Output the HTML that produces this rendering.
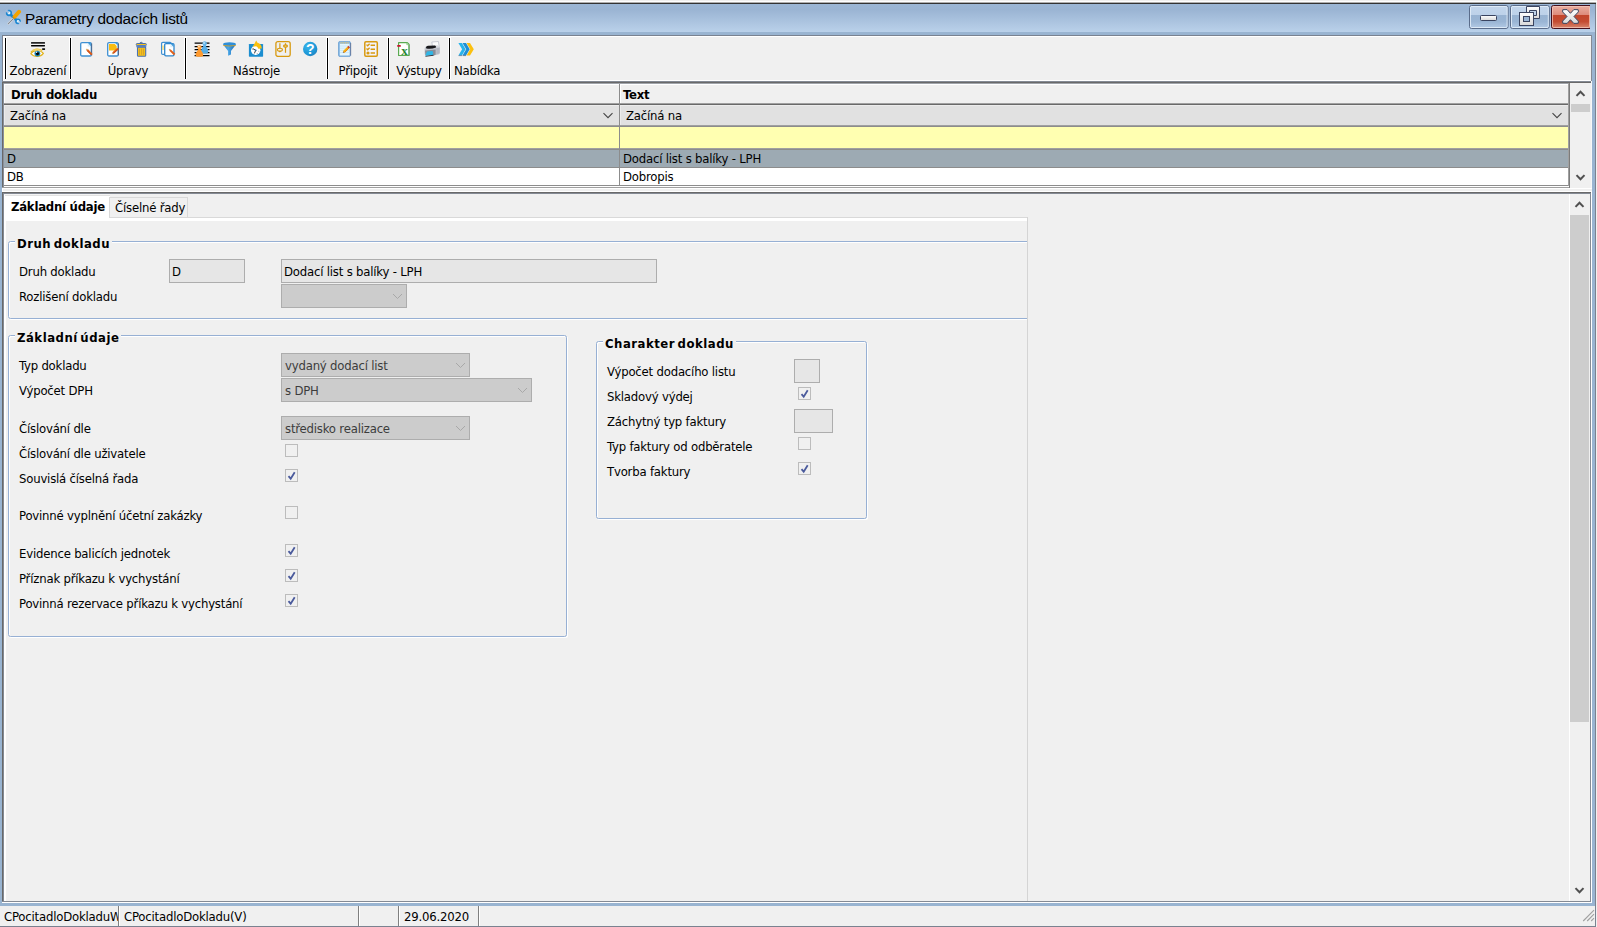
<!DOCTYPE html>
<html lang="cs">
<head>
<meta charset="utf-8">
<title>Parametry dodacích listů</title>
<style>
html,body{margin:0;padding:0;}
body{width:1597px;height:927px;overflow:hidden;position:relative;background:#f0f0f0;
 font-family:"DejaVu Sans Condensed","Liberation Sans","DejaVu Sans",sans-serif;font-size:13px;color:#000;letter-spacing:-0.2px;}
div,span,svg{position:absolute;box-sizing:border-box;}
.t{white-space:nowrap;line-height:16px;height:16px;margin-top:1px;}
.b{font-weight:bold;letter-spacing:-0.25px;}
.gt{font-weight:bold;letter-spacing:0.5px;word-spacing:-2px;background:#f0f0f0;padding:0 2px 0 2px;margin-left:-1px;}
.sep{width:1px;background:#000;top:38px;height:41px;}
.sepw{width:3px;background:#fff;top:37px;height:42px;}
.lab{top:62px;text-align:center;}
.inp{background:#e6e6e6;border:1px solid #adadad;height:24px;}
.cmb{background:#cccccc;border:1px solid #adadad;height:24px;color:#3c3c3c;}
.cb{width:13px;height:13px;border:1px solid #bcbcbc;background:#f0f0f0;}
.grp{border:1px solid #97b0d4;border-radius:2.5px;box-shadow:inset 1px 1px 0 #fff, 1px 1px 0 #fff;}
</style>
</head>
<body>
<!-- window frame -->
<div style="left:0;top:0;width:1597px;height:1px;background:#f0f0f0"></div>
<div style="left:0;top:1px;width:1597px;height:1px;background:#fff"></div>
<div style="left:0;top:2px;width:1596px;height:1px;background:#aeaeae"></div>
<div style="left:0;top:3px;width:1596px;height:1px;background:#333"></div>
<div id="frame" style="left:0;top:4px;width:1595px;height:902px;background:#99b4d1"></div>
<div style="left:1595px;top:4px;width:1px;height:923px;background:#7a8290"></div>
<div id="titlebar" style="left:0;top:4px;width:1595px;height:28px;background:linear-gradient(#9bb6d5,#9ab4d3 20%,#bad1ea)"></div>
<div class="t" id="title" style="left:25px;top:8px;font-family:'Liberation Sans',sans-serif;font-size:15.4px;line-height:20px;height:20px;letter-spacing:-0.27px">Parametry dodacích listů</div>

<!-- caption buttons -->
<svg style="left:1465px;top:4px" width="130" height="28" viewBox="1465 4 130 28">
<defs>
<linearGradient id="bg1" x1="0" y1="0" x2="0" y2="1"><stop offset="0" stop-color="#c3d6ec"/><stop offset="0.42" stop-color="#bdd1e9"/><stop offset="0.43" stop-color="#98b3d2"/><stop offset="0.7" stop-color="#9ab5d4"/><stop offset="1" stop-color="#b4cbe6"/></linearGradient>
<linearGradient id="bg2" x1="0" y1="0" x2="0" y2="1"><stop offset="0" stop-color="#eab0a2"/><stop offset="0.42" stop-color="#dd8a7a"/><stop offset="0.43" stop-color="#c2462c"/><stop offset="0.7" stop-color="#c44c32"/><stop offset="1" stop-color="#d98a72"/></linearGradient>
<linearGradient id="gw" x1="0" y1="0" x2="0" y2="1"><stop offset="0" stop-color="#ffffff"/><stop offset="1" stop-color="#d8d8d8"/></linearGradient>
</defs>
<rect x="1469.5" y="5.5" width="38.6" height="23" rx="2" fill="url(#bg1)" stroke="#5a6c8a"/>
<rect x="1470.5" y="6.5" width="36.6" height="21" rx="1.2" fill="none" stroke="#e4eef9" stroke-opacity="0.85"/>
<rect x="1510.5" y="5.5" width="38.8" height="23" rx="2" fill="url(#bg1)" stroke="#5a6c8a"/>
<rect x="1511.5" y="6.5" width="36.8" height="21" rx="1.2" fill="none" stroke="#e4eef9" stroke-opacity="0.85"/>
<path d="M1590 5.5 H1553.5 Q1551.5 5.5 1551.5 7.5 V26.5 Q1551.5 28.5 1553.5 28.5 H1590 Z" fill="url(#bg2)"/>
<path d="M1590 5.5 H1553.5 Q1551.5 5.5 1551.5 7.5 V26.5 Q1551.5 28.5 1553.5 28.5 H1590" fill="none" stroke="#45101c"/>
<rect x="1552.5" y="6.5" width="37" height="21" rx="1.2" fill="none" stroke="#f4c8bc" stroke-opacity="0.75"/>
<!-- minimize glyph -->
<rect x="1480.5" y="15.5" width="16" height="5" rx="1" fill="url(#gw)" stroke="#3a4460"/>
<!-- restore glyph -->
<path d="M1526.5 6.5 h13 v12 h-13 z M1529.5 10.5 v5 h7 v-5 z" fill="url(#gw)" fill-rule="evenodd" stroke="#3a4460"/>
<rect x="1519.5" y="12.5" width="14" height="13" fill="url(#gw)" stroke="#3a4460"/>
<rect x="1523.5" y="16.5" width="6" height="5" fill="#9ab5d4" stroke="#3a4460"/>
<!-- close glyph -->
<path d="M1562.8 9.7 L1567.1 9.6 L1570.45 13.3 L1573.8 9.6 L1578.2 9.7 L1578.4 11.9 L1574.0 16.5 L1578.4 21.1 L1578.2 23.3 L1573.8 23.4 L1570.45 19.7 L1567.1 23.4 L1562.8 23.3 L1562.6 21.1 L1567.0 16.5 L1562.6 11.9 Z" fill="url(#gw)" stroke="#3a4460" stroke-width="1" stroke-linejoin="round"/>
</svg>

<!-- toolbar -->
<div id="toolbar" style="left:2px;top:35px;width:1590px;height:46px;background:#f0f0f0;border:1px solid #7a8290;border-bottom:none;box-shadow:inset 1px 1px 0 #fff"></div>
<div style="left:3px;top:80px;width:1588px;height:1px;background:#fff"></div>


<!-- toolbar separators -->
<div class="sepw" style="left:4px"></div><div class="sep" style="left:5px"></div>
<div class="sepw" style="left:69px"></div><div class="sep" style="left:70px"></div>
<div class="sepw" style="left:184px"></div><div class="sep" style="left:185px"></div>
<div class="sepw" style="left:326px"></div><div class="sep" style="left:327px"></div>
<div class="sepw" style="left:387px"></div><div class="sep" style="left:388px"></div>
<div class="sepw" style="left:448px"></div><div class="sep" style="left:449px"></div>
<!-- toolbar labels -->
<div class="t lab" style="left:6px;width:64px">Zobrazení</div>
<div class="t lab" style="left:71px;width:114px">Úpravy</div>
<div class="t lab" style="left:186px;width:141px">Nástroje</div>
<div class="t lab" style="left:328px;width:60px">Připojit</div>
<div class="t lab" style="left:389px;width:60px">Výstupy</div>
<div class="t" style="left:454px;top:62px">Nabídka</div>
<!-- ICONS-BEGIN -->
<!-- title icon -->
<svg style="left:5px;top:9px" width="17" height="17" viewBox="0 0 17 17">
<path d="M4.6 4.8 L12.6 12.2" stroke="#1b86d2" stroke-width="2.6" fill="none"/>
<circle cx="4" cy="4" r="2.3" fill="#e4f4fb" stroke="#1b86d2" stroke-width="1.7"/>
<path d="M3.6 3.6 L0.8 1.2" stroke="#a2bcda" stroke-width="2.2" fill="none"/>
<circle cx="13" cy="12.3" r="2.1" fill="#e4f4fb" stroke="#1b86d2" stroke-width="1.6"/>
<path d="M13.4 12.6 L16 14.6" stroke="#b0c9e5" stroke-width="2.1" fill="none"/>
<path d="M8.4 9.6 L2.9 15.2" stroke="#e8eef4" stroke-width="2.2" fill="none"/>
<path d="M8.6 9.4 L2.9 15.2" stroke="#7c838c" stroke-width="1.1" fill="none"/>
<path d="M9.6 7.8 L14 2.8" stroke="#f4a300" stroke-width="4" stroke-linecap="round" fill="none"/>
<path d="M8 7.6 L9.8 9.6" stroke="#d88600" stroke-width="1" fill="none"/>
</svg>
<!-- eye / Zobrazeni -->
<svg style="left:30px;top:41px" width="16" height="17" viewBox="0 0 16 17">
<rect x="1" y="1" width="14" height="1.7" rx="0.5" fill="#262626"/>
<rect x="1" y="4" width="14" height="1.4" rx="0.4" fill="#000"/>
<rect x="12.1" y="7.2" width="3" height="1.8" rx="0.4" fill="#111"/>
<path d="M0.9 11.4 C3 7.6 9 7.2 12.2 9.6" fill="none" stroke="#e9bb22" stroke-width="1.3"/>
<path d="M2.2 9.6 C4.4 8.2 8 8 10.4 9" fill="none" stroke="#f2d878" stroke-width="0.8"/>
<path d="M0.8 12.7 C3.4 8.9 10.6 8.9 13.4 12.4 C10.6 16.5 3.8 16.3 0.8 12.7 Z" fill="#fff" stroke="#e2b41e" stroke-width="1.1"/>
<circle cx="7.4" cy="12.6" r="2.9" fill="#1f86b6"/>
<circle cx="7.5" cy="12.6" r="1.6" fill="#050505"/>
<circle cx="6.6" cy="11.3" r="0.7" fill="#fff"/>
</svg>
<!-- new doc -->
<svg style="left:79px;top:41px" width="16" height="16" viewBox="0 0 16 16">
<rect x="1.7" y="1.6" width="10.6" height="13.4" rx="1.3" fill="#fff" stroke="#3f90d2" stroke-width="1.3"/>
<path d="M12.7 2.4 V14.4" stroke="#4a506a" stroke-width="0.7"/>
<path d="M8.6 1.8 H11.9 V5.4 Z" fill="#3f9ada"/>
<path d="M8.6 1.8 L11.9 5.4 H8.6 Z" fill="#d6ecfa"/>
<path d="M7.3 8.1 L8.6 9.2" stroke="#d4b070" stroke-width="1.6" fill="none"/>
<path d="M8.4 9 L12.9 13.6" stroke="#e0601a" stroke-width="2" fill="none"/>
<path d="M8 9.6 L12.4 14" stroke="#b8401a" stroke-width="0.7" fill="none"/>
</svg>
<!-- edit doc -->
<svg style="left:106px;top:41px" width="16" height="16" viewBox="0 0 16 16">
<rect x="1.7" y="1.6" width="10.4" height="13.4" rx="1.3" fill="#fff" stroke="#3f90d2" stroke-width="1.3"/>
<path d="M12.5 2.4 V14.4" stroke="#4a506a" stroke-width="0.7"/>
<path d="M9 1.8 H11.6 V4.6 Z" fill="#3f9ada"/>
<path d="M3 3 H8.8 L10.7 5 V9.4 H3 Z" fill="#f9bc12"/>
<path d="M6.2 12.7 L7.4 11.6" stroke="#d4b070" stroke-width="1.5" fill="none"/>
<path d="M7.1 11.9 L12 7.4" stroke="#e0601a" stroke-width="2" fill="none"/>
<path d="M7.6 12.4 L12.4 8" stroke="#b8401a" stroke-width="0.7" fill="none"/>
</svg>
<!-- trash -->
<svg style="left:133px;top:41px" width="16" height="16" viewBox="0 0 16 16">
<path d="M6.6 2.2 Q8.2 0.2 9.8 2.2" fill="#f9c21a" stroke="#4a72b0" stroke-width="1"/>
<rect x="3.3" y="2.5" width="10" height="2" rx="0.8" fill="#f9c21a" stroke="#4a72b0" stroke-width="1"/>
<rect x="3.3" y="4.4" width="10" height="1.9" fill="#5f86c6"/>
<rect x="4.5" y="6.2" width="8.2" height="9" rx="0.8" fill="#f9c21a" stroke="#4a72b0" stroke-width="1.1"/>
<path d="M6.4 7.6 V13.8 M8.6 7.6 V13.8 M10.6 7.6 V13.8" stroke="#d2a22a" stroke-width="1"/>
</svg>
<!-- copy doc -->
<svg style="left:160px;top:41px" width="16" height="16" viewBox="0 0 16 16">
<rect x="1.6" y="1.4" width="9.6" height="12" rx="1.2" fill="#fff" stroke="#3f90d2" stroke-width="1.2"/>
<path d="M3 4.6 V9" stroke="#f5cf52" stroke-width="1.2"/>
<rect x="4.7" y="2.6" width="9.3" height="12.2" rx="1.2" fill="#fff" stroke="#2f86cc" stroke-width="1.3"/>
<path d="M10.4 2.8 H13.6 V6.2 Z" fill="#3f9ada"/>
<path d="M10.4 2.8 L13.6 6.2 H10.4 Z" fill="#d6ecfa"/>
<path d="M9.2 8.3 L10.3 9.3" stroke="#b8a078" stroke-width="1.5" fill="none"/>
<path d="M10.1 9.1 L14.6 13.5" stroke="#e0601a" stroke-width="2" fill="none"/>
</svg>
<!-- users list -->
<svg style="left:194px;top:41px" width="16" height="16" viewBox="0 0 16 16">
<path d="M0.6 2.1 H15.5 M0.6 5.6 H15.5 M0.6 8.6 H15.5 M0.6 11.7 H15.5 M0.6 14.7 H15.5" stroke="#000" stroke-width="1.3"/>
<path d="M9.6 3.6 H11.7 C11.7 6 14.3 7.4 14.3 10.6 Q14.3 12.4 12.6 12.4 H8.7 Q7 12.4 7 10.6 C7 7.4 9.6 6 9.6 3.6 Z" fill="#57aee6"/>
<circle cx="10.65" cy="2.5" r="2.2" fill="#64b6ea"/>
<circle cx="10.1" cy="1.9" r="0.9" fill="#c4e4f8"/>
<path d="M4.4 7.2 H6.5 C6.5 9.6 9.2 11 9.2 14 Q9.2 15.7 7.5 15.7 H3.3 Q1.6 15.7 1.6 14 C1.6 11 4.4 9.6 4.4 7.2 Z" fill="#ff9a2e"/>
<circle cx="5.4" cy="6.1" r="2.2" fill="#ffa03a"/>
<circle cx="4.9" cy="5.5" r="0.9" fill="#ffe2c0"/>
</svg>
<!-- funnel -->
<svg style="left:221px;top:41px" width="16" height="16" viewBox="0 0 16 16">
<defs><linearGradient id="fg" x1="0" y1="0" x2="1" y2="0"><stop offset="0" stop-color="#2a86d0"/><stop offset="0.4" stop-color="#4aa6e6"/><stop offset="1" stop-color="#1668b8"/></linearGradient></defs>
<path d="M2.1 3.4 L7.1 10 V14.8 L10 13.6 V10 L14.9 3.4 Z" fill="url(#fg)"/>
<ellipse cx="8.5" cy="3.2" rx="6.4" ry="1.9" fill="#2e8ed8"/>
<path d="M2.3 4.5 Q8.5 5.5 14.7 4.5" stroke="#d8a020" stroke-width="0.9" fill="none"/>
</svg>
<!-- clock arrow -->
<svg style="left:248px;top:40px" width="16" height="17" viewBox="0 -1 16 17">
<rect x="0.9" y="2.9" width="14.2" height="12.8" rx="0.6" fill="#1c8ed0"/>
<circle cx="7.7" cy="9.3" r="4.7" fill="#fff"/>
<path d="M7.7 9.3 L4.8 7.6 M7.7 9.3 L6.4 12.4" stroke="#222" stroke-width="0.9"/>
<path d="M4 8 L4.8 8.3 M9 13 L9.3 12.3 M11.2 10.6 L10.5 10.3" stroke="#555" stroke-width="0.7"/>
<circle cx="7.7" cy="9.3" r="0.9" fill="#2a6a9a"/>
<path d="M8.2 -0.4 L4.7 5.7 L8.2 5.3 Q9.9 6 10.3 7.7 L13.8 7.5 Q13.7 2.7 9.5 1.7 Z" fill="#f9c010"/>
</svg>
<!-- sliders -->
<svg style="left:275px;top:41px" width="16" height="16" viewBox="0 0 16 16">
<rect x="0.9" y="0.7" width="14.3" height="14.7" rx="2" fill="#f0f0f0" stroke="#d89a10" stroke-width="1.3"/>
<path d="M4.9 2.2 V7.4" stroke="#d89a10" stroke-width="1.2"/>
<ellipse cx="4.9" cy="8.7" rx="2.5" ry="1.4" fill="none" stroke="#d89a10" stroke-width="1.1"/>
<path d="M3.2 10 L4.9 11.6 L6.6 10 Z" fill="#d89a10"/>
<path d="M10.5 2.2 V11.8" stroke="#d89a10" stroke-width="1.2"/>
<ellipse cx="10.5" cy="5.1" rx="2.6" ry="1.8" fill="#d89a10"/>
<path d="M9.6 5.1 H11.4" stroke="#f6e4b8" stroke-width="0.8"/>
</svg>
<!-- help -->
<svg style="left:302px;top:41px" width="17" height="16" viewBox="0 0 17 16">
<defs><radialGradient id="hg" cx="0.35" cy="0.3" r="0.8"><stop offset="0" stop-color="#3ab4ea"/><stop offset="0.7" stop-color="#1c96d6"/><stop offset="1" stop-color="#2a7eb8"/></radialGradient></defs>
<circle cx="8.2" cy="8" r="7.2" fill="url(#hg)"/>
<text x="8.3" y="13" font-family="'Liberation Sans',sans-serif" font-weight="bold" font-size="14" text-anchor="middle" fill="#fff" letter-spacing="0">?</text>
</svg>
<!-- notepad -->
<svg style="left:337px;top:41px" width="16" height="16" viewBox="0 0 16 16">
<rect x="1.5" y="0.4" width="12" height="15.2" rx="1.6" fill="#8cbbe6" stroke="#6a9fd2" stroke-width="0.8"/>
<rect x="2.9" y="2.8" width="9.6" height="11.6" fill="#e4f6fd"/>
<path d="M3 5 H12.4 M3 7.2 H12.4 M3 9.4 H12.4 M3 11.6 H12.4" stroke="#c2e2f6" stroke-width="0.8"/>
<path d="M3.4 1.8 H11.8" stroke="#d8c070" stroke-width="1.3" stroke-dasharray="1.1 0.7"/>
<path d="M13.7 2 V14.6" stroke="#5a5a78" stroke-width="0.6"/>
<path d="M6.2 11.6 L7.2 10.5" stroke="#8a6a4a" stroke-width="1.4"/>
<path d="M6.9 10.9 L11.2 6.6" stroke="#f8b410" stroke-width="2.3"/>
<path d="M7.5 11.4 L11.7 7.2" stroke="#ee7a10" stroke-width="0.9"/>
<path d="M11 6.8 L12.2 5.6" stroke="#c8402a" stroke-width="2.3"/>
</svg>
<!-- checklist -->
<svg style="left:363px;top:41px" width="16" height="16" viewBox="0 0 16 16">
<rect x="1.8" y="0.8" width="12.5" height="14.4" rx="1.1" fill="#f3f3fb" stroke="#d89a10" stroke-width="1.5"/>
<path d="M3.5 3.6 L4.7 4.8 L6.6 2.8 M3.5 7.5 L4.7 8.7 L6.6 6.7" stroke="#d89a10" stroke-width="1.3" fill="none"/>
<circle cx="5" cy="12" r="1.6" fill="#d89a10"/>
<path d="M7.6 4.2 H12 M7.6 8.2 H12 M7.6 12 H12" stroke="#d89a10" stroke-width="1.5"/>
</svg>
<!-- excel -->
<svg style="left:397px;top:41px" width="16" height="16" viewBox="0 0 16 16">
<path d="M1.6 1.6 H10.3 L11.9 3.2 V14.5 H1.6 Z" fill="#fff" stroke="#5aaa50" stroke-width="1.2" stroke-linejoin="round"/>
<path d="M9.8 1.8 V3.7 H11.8" fill="none" stroke="#8cc884" stroke-width="0.9"/>
<path d="M12.4 3.4 V14.6" stroke="#4a8a4a" stroke-width="0.5"/>
<rect x="0.2" y="4.1" width="3.6" height="1.7" rx="0.5" fill="#c8102a"/>
<text x="7.5" y="13.8" font-family="'Liberation Serif',serif" font-weight="bold" font-size="13" text-anchor="middle" fill="#2a8636" letter-spacing="0">x</text>
</svg>
<!-- printer -->
<svg style="left:424px;top:41px" width="16" height="16" viewBox="0 0 16 16">
<path d="M7.8 1 L14.4 0.5 L15.2 5.6 L8.6 6.2 Z" fill="#fdfdfd" stroke="#b4b8c6" stroke-width="0.7"/>
<path d="M0.6 8 Q0.6 5.4 3.2 5.2 L13.4 4.6 Q15.8 4.8 15.8 7.2 V11.8 Q15.8 13.2 14.4 13.6 L9.6 14.6 L1.6 14 Q0.6 13.6 0.6 12.4 Z" fill="#c2c5cd"/>
<path d="M2 6.4 Q2.2 4.9 4 4.8 L11 4.5 Q12.3 5 12 6.6 Q7 8.4 2.6 7.6 Q2 7.2 2 6.4 Z" fill="#18181c"/>
<path d="M12.4 6.4 L15.6 6 V12.2 L12.4 13.2 Z" fill="#b4b8c2"/>
<path d="M12.2 5 L15.4 5.2 L15.6 6.4 L12.4 6.8 Z" fill="#dcdee4"/>
<path d="M1 9.4 L11.6 8.6 V13.8 L9.6 14.6 L1.4 14 Z" fill="#8a8e98"/>
<path d="M3 10.4 L8.6 10 L9.4 13.8 L1.2 15 Z" fill="#2fb6e6"/>
<path d="M1.2 15 L9.4 13.8 L9.5 14.7 L1.7 15.8 Z" fill="#34383f"/>
</svg>
<!-- arrows -->
<svg style="left:458px;top:41px" width="16" height="16" viewBox="0 0 16 16">
<path d="M8.6 2 H12 L15.8 8.3 L12 14.6 H8.6 L12.2 8.3 Z" fill="#fbc010"/>
<path d="M4.5 2 H8 L11.7 8.3 L8 14.6 H4.5 L8.2 8.3 Z" fill="#1e8fd6"/>
<path d="M0.4 2 H3.9 L7.6 8.3 L3.9 14.6 H0.4 L4.1 8.3 Z" fill="#28b4ec"/>
<path d="M0.6 14.6 H3.9 M4.7 14.6 H8" stroke="#4a5a78" stroke-width="0.6"/>
</svg>
<!-- ICONS-END -->

<!-- grid -->
<div id="grid" style="left:2px;top:81px;width:1590px;height:107px;background:#f0f0f0"></div>
<div style="left:2px;top:81px;width:1590px;height:1px;background:#848a94"></div>
<div style="left:2px;top:82px;width:1590px;height:1px;background:#696969"></div>
<div style="left:3px;top:83px;width:1567px;height:1px;background:#a0a4ab"></div>
<div style="left:2px;top:82px;width:1px;height:106px;background:#696969"></div>
<div style="left:3px;top:83px;width:1px;height:105px;background:#8a909a"></div>
<!-- header row -->
<div style="left:4px;top:84px;width:1564px;height:19px;background:#f0f0f0;box-shadow:inset 1px 1px 0 #fff"></div>
<div style="left:620px;top:84px;width:1px;height:19px;background:#fff"></div>
<div style="left:4px;top:103px;width:1564px;height:1px;background:#a0a0a0"></div>
<div style="left:4px;top:104px;width:1564px;height:1px;background:#696969"></div>
<div class="t b" style="left:11px;top:86px">Druh dokladu</div>
<div class="t b" style="left:623px;top:86px">Text</div>
<!-- filter row -->
<div style="left:4px;top:105px;width:1564px;height:20px;background:#e1e1e1;box-shadow:inset 1px 1px 0 #ececec"></div>
<div style="left:620px;top:105px;width:1px;height:20px;background:#ececec"></div>
<div style="left:4px;top:125px;width:1564px;height:1px;background:#a0a0a0"></div>
<div style="left:4px;top:126px;width:1564px;height:1px;background:#8c8c8c"></div>
<div class="t" style="left:10px;top:107px">Začíná na</div>
<div class="t" style="left:626px;top:107px">Začíná na</div>
<svg style="left:602px;top:112px" width="12" height="8" viewBox="0 0 12 8"><path d="M1.5 1.2 L6 5.7 L10.5 1.2" fill="none" stroke="#444" stroke-width="1.1"/></svg>
<svg style="left:1551px;top:112px" width="12" height="8" viewBox="0 0 12 8"><path d="M1.5 1.2 L6 5.7 L10.5 1.2" fill="none" stroke="#444" stroke-width="1.1"/></svg>
<!-- yellow row -->
<div style="left:4px;top:127px;width:1564px;height:21px;background:#ffffb1"></div>
<div style="left:4px;top:148px;width:1564px;height:1px;background:#a0a0a0"></div>
<div style="left:4px;top:149px;width:1564px;height:1px;background:#8c8c8c"></div>
<!-- selected row -->
<div style="left:4px;top:150px;width:1564px;height:17px;background:#9daab3"></div>
<div style="left:4px;top:167px;width:1564px;height:1px;background:#8c8c8c"></div>
<div class="t" style="left:7px;top:150px">D</div>
<div class="t" style="left:623px;top:150px">Dodací list s balíky - LPH</div>
<!-- row DB -->
<div style="left:4px;top:168px;width:1564px;height:17px;background:#fff"></div>
<div class="t" style="left:7px;top:168px">DB</div>
<div class="t" style="left:623px;top:168px">Dobropis</div>
<div style="left:4px;top:185px;width:1566px;height:1px;background:#8c8c8c"></div>
<div style="left:4px;top:186px;width:1566px;height:1px;background:#fff"></div>
<div style="left:2px;top:187px;width:1568px;height:1px;background:#a0a0a0"></div>
<!-- column separator and right border -->
<div style="left:619px;top:84px;width:1px;height:101px;background:#8c8c8c"></div>
<div style="left:1568px;top:83px;width:1px;height:103px;background:#a0a0a0"></div>
<div style="left:1569px;top:83px;width:1px;height:105px;background:#7c7c7c"></div>
<!-- grid scrollbar -->
<div style="left:1570px;top:83px;width:21px;height:105px;background:#f0f0f0"></div>
<div style="left:1571px;top:104px;width:19px;height:8px;background:#cdcdcd"></div>
<svg style="left:1575px;top:89px" width="12" height="9" viewBox="0 0 12 9"><path d="M1.5 6.9 L5.5 2.7 L9.5 6.9" fill="none" stroke="#505050" stroke-width="2"/></svg>
<svg style="left:1575px;top:173px" width="12" height="9" viewBox="0 0 12 9"><path d="M1.5 2.1 L5.5 6.3 L9.5 2.1" fill="none" stroke="#505050" stroke-width="2"/></svg>
<div style="left:1591px;top:35px;width:1px;height:46px;background:#848a94"></div>
<div style="left:1591px;top:81px;width:1px;height:111px;background:#f8f8f8"></div>
<!-- splitter -->
<div style="left:2px;top:188px;width:1590px;height:4px;background:#f0f0f0;border-top:1px solid #fff;border-bottom:1px solid #fff;border-left:1px solid #fff"></div>
<!-- lower panel -->
<div id="lower" style="left:2px;top:192px;width:1590px;height:711px;background:#f0f0f0"></div>
<div style="left:2px;top:192px;width:1590px;height:1px;background:#696969"></div>
<div style="left:3px;top:193px;width:1588px;height:1px;background:#848a94"></div>
<div style="left:2px;top:192px;width:1px;height:710px;background:#696969"></div>
<div style="left:3px;top:193px;width:1px;height:708px;background:#848a94"></div>
<div style="left:2px;top:901px;width:1589px;height:1px;background:#848a94"></div>
<div style="left:2px;top:902px;width:1590px;height:1px;background:#fff"></div>
<div style="left:1590px;top:194px;width:1px;height:708px;background:#848a94"></div>
<div style="left:1591px;top:192px;width:1px;height:711px;background:#fff"></div>
<!-- tabs -->
<div style="left:4px;top:194px;width:2px;height:707px;background:#fff"></div>
<div style="left:4px;top:218px;width:1023px;height:3px;background:#fff"></div>
<div style="left:110px;top:217px;width:918px;height:1px;background:#d9d9d9"></div>
<div style="left:1027px;top:217px;width:1px;height:684px;background:#d4d4d4"></div>
<div id="tab1" style="left:4px;top:194px;width:106px;height:27px;background:#fff;border-top:1px solid #f4f4f4"></div>
<div id="tab2" style="left:109px;top:197px;width:79px;height:21px;background:#f0f0f0;border:1px solid #d9d9d9"></div>
<div style="left:5px;top:195px;width:105px;height:1px;background:#e2e2e2"></div>
<div class="t b" style="left:11px;top:198px">Základní údaje</div>
<div class="t" style="left:115px;top:199px">Číselné řady</div>
<!-- group 1 -->
<div id="g1clip" style="left:6px;top:221px;width:1021px;height:680px;overflow:hidden">
<div class="grp" style="left:2px;top:20px;width:1100px;height:78px"></div>
<div class="t gt" style="left:10px;top:14px">Druh dokladu</div>
</div>
<div class="t" style="left:19px;top:263px">Druh dokladu</div>
<div class="t" style="left:19px;top:288px">Rozlišení dokladu</div>

<div class="inp" style="left:169px;top:259px;width:76px"><div class="t" style="left:2px;top:3px">D</div></div>
<div class="inp" style="left:281px;top:259px;width:376px"><div class="t" style="left:2px;top:3px">Dodací list s balíky - LPH</div></div>
<div class="cmb" style="left:281px;top:284px;width:126px"><svg style="right:3px;top:8px" width="11" height="7" viewBox="0 0 11 7"><path d="M1 1 L5.5 5.5 L10 1" fill="none" stroke="#a8a8a8" stroke-width="1"/></svg></div>
<!-- group 2 -->
<div class="grp" style="left:8px;top:335px;width:559px;height:302px"></div>
<div class="t gt" style="left:16px;top:329px">Základní údaje</div>
<div class="t" style="left:19px;top:357px">Typ dokladu</div>
<div class="t" style="left:19px;top:382px">Výpočet DPH</div>
<div class="t" style="left:19px;top:420px">Číslování dle</div>
<div class="t" style="left:19px;top:445px">Číslování dle uživatele</div>
<div class="t" style="left:19px;top:470px">Souvislá číselná řada</div>
<div class="t" style="left:19px;top:507px">Povinné vyplnění účetní zakázky</div>
<div class="t" style="left:19px;top:545px">Evidence balicích jednotek</div>
<div class="t" style="left:19px;top:570px">Příznak příkazu k vychystání</div>
<div class="t" style="left:19px;top:595px">Povinná rezervace příkazu k vychystání</div>

<div class="cmb" style="left:281px;top:353px;width:189px"><div class="t" style="left:3px;top:3px">vydaný dodací list</div><svg style="right:3px;top:8px" width="11" height="7" viewBox="0 0 11 7"><path d="M1 1 L5.5 5.5 L10 1" fill="none" stroke="#a8a8a8" stroke-width="1"/></svg></div>
<div class="cmb" style="left:281px;top:378px;width:251px"><div class="t" style="left:3px;top:3px">s DPH</div><svg style="right:3px;top:8px" width="11" height="7" viewBox="0 0 11 7"><path d="M1 1 L5.5 5.5 L10 1" fill="none" stroke="#a8a8a8" stroke-width="1"/></svg></div>
<div class="cmb" style="left:281px;top:416px;width:189px"><div class="t" style="left:3px;top:3px">středisko realizace</div><svg style="right:3px;top:8px" width="11" height="7" viewBox="0 0 11 7"><path d="M1 1 L5.5 5.5 L10 1" fill="none" stroke="#a8a8a8" stroke-width="1"/></svg></div>
<div class="cb" style="left:285px;top:444px"></div>
<div class="cb" style="left:285px;top:469px"><svg style="left:1px;top:0" width="10" height="11" viewBox="0 0 10 11"><path d="M1.5 6.2 L3.7 8.7 L7.7 2.3" fill="none" stroke="#4a5a9c" stroke-width="1.8"/></svg></div>
<div class="cb" style="left:285px;top:506px"></div>
<div class="cb" style="left:285px;top:544px"><svg style="left:1px;top:0" width="10" height="11" viewBox="0 0 10 11"><path d="M1.5 6.2 L3.7 8.7 L7.7 2.3" fill="none" stroke="#4a5a9c" stroke-width="1.8"/></svg></div>
<div class="cb" style="left:285px;top:569px"><svg style="left:1px;top:0" width="10" height="11" viewBox="0 0 10 11"><path d="M1.5 6.2 L3.7 8.7 L7.7 2.3" fill="none" stroke="#4a5a9c" stroke-width="1.8"/></svg></div>
<div class="cb" style="left:285px;top:594px"><svg style="left:1px;top:0" width="10" height="11" viewBox="0 0 10 11"><path d="M1.5 6.2 L3.7 8.7 L7.7 2.3" fill="none" stroke="#4a5a9c" stroke-width="1.8"/></svg></div>

<!-- group 3 -->
<div class="grp" style="left:596px;top:341px;width:271px;height:178px"></div>
<div class="t gt" style="left:604px;top:335px">Charakter dokladu</div>
<div class="t" style="left:607px;top:363px">Výpočet dodacího listu</div>
<div class="t" style="left:607px;top:388px">Skladový výdej</div>
<div class="t" style="left:607px;top:413px">Záchytný typ faktury</div>
<div class="t" style="left:607px;top:438px">Typ faktury od odběratele</div>
<div class="t" style="left:607px;top:463px">Tvorba faktury</div>

<div class="inp" style="left:794px;top:359px;width:26px"></div>
<div class="inp" style="left:794px;top:409px;width:39px"></div>
<div class="cb" style="left:798px;top:387px"><svg style="left:1px;top:0" width="10" height="11" viewBox="0 0 10 11"><path d="M1.5 6.2 L3.7 8.7 L7.7 2.3" fill="none" stroke="#4a5a9c" stroke-width="1.8"/></svg></div>
<div class="cb" style="left:798px;top:437px"></div>
<div class="cb" style="left:798px;top:462px"><svg style="left:1px;top:0" width="10" height="11" viewBox="0 0 10 11"><path d="M1.5 6.2 L3.7 8.7 L7.7 2.3" fill="none" stroke="#4a5a9c" stroke-width="1.8"/></svg></div>

<!-- lower scrollbar -->
<div style="left:1569px;top:194px;width:1px;height:707px;background:#fff"></div>
<div style="left:1570px;top:194px;width:20px;height:707px;background:#f0f0f0"></div>
<div style="left:1570px;top:215px;width:19px;height:507px;background:#cdcdcd"></div>
<svg style="left:1574px;top:200px" width="12" height="9" viewBox="0 0 12 9"><path d="M1.5 6.9 L5.5 2.7 L9.5 6.9" fill="none" stroke="#505050" stroke-width="2"/></svg>
<svg style="left:1574px;top:886px" width="12" height="9" viewBox="0 0 12 9"><path d="M1.5 2.1 L5.5 6.3 L9.5 2.1" fill="none" stroke="#505050" stroke-width="2"/></svg>

<!-- status bar -->
<div id="status" style="left:0;top:906px;width:1595px;height:20px;background:#f0f0f0"></div>
<div style="left:0;top:906px;width:118px;height:19px;overflow:hidden"><div class="t" style="left:4px;top:2px">CPocitadloDokladuW</div></div>
<div class="t" style="left:124px;top:908px">CPocitadloDokladu(V)</div>
<div class="t" style="left:404px;top:908px">29.06.2020</div>
<div style="left:118px;top:906px;width:2px;height:20px;background:#fff;border-left:1px solid #808080"></div>
<div style="left:358px;top:906px;width:2px;height:20px;background:#fff;border-left:1px solid #808080"></div>
<div style="left:398px;top:906px;width:2px;height:20px;background:#fff;border-left:1px solid #808080"></div>
<div style="left:478px;top:906px;width:2px;height:20px;background:#fff;border-left:1px solid #808080"></div>
<svg style="left:1581px;top:908px" width="14" height="14" viewBox="0 0 14 14"><path d="M2.2 13 L13 2.2 M6.2 13 L13 6.2 M10.2 13 L13 10.2" stroke="#a0a0a0" stroke-width="1.1" fill="none"/></svg>
<div style="left:0;top:926px;width:1596px;height:1px;background:#7a8290"></div>
</body>
</html>
